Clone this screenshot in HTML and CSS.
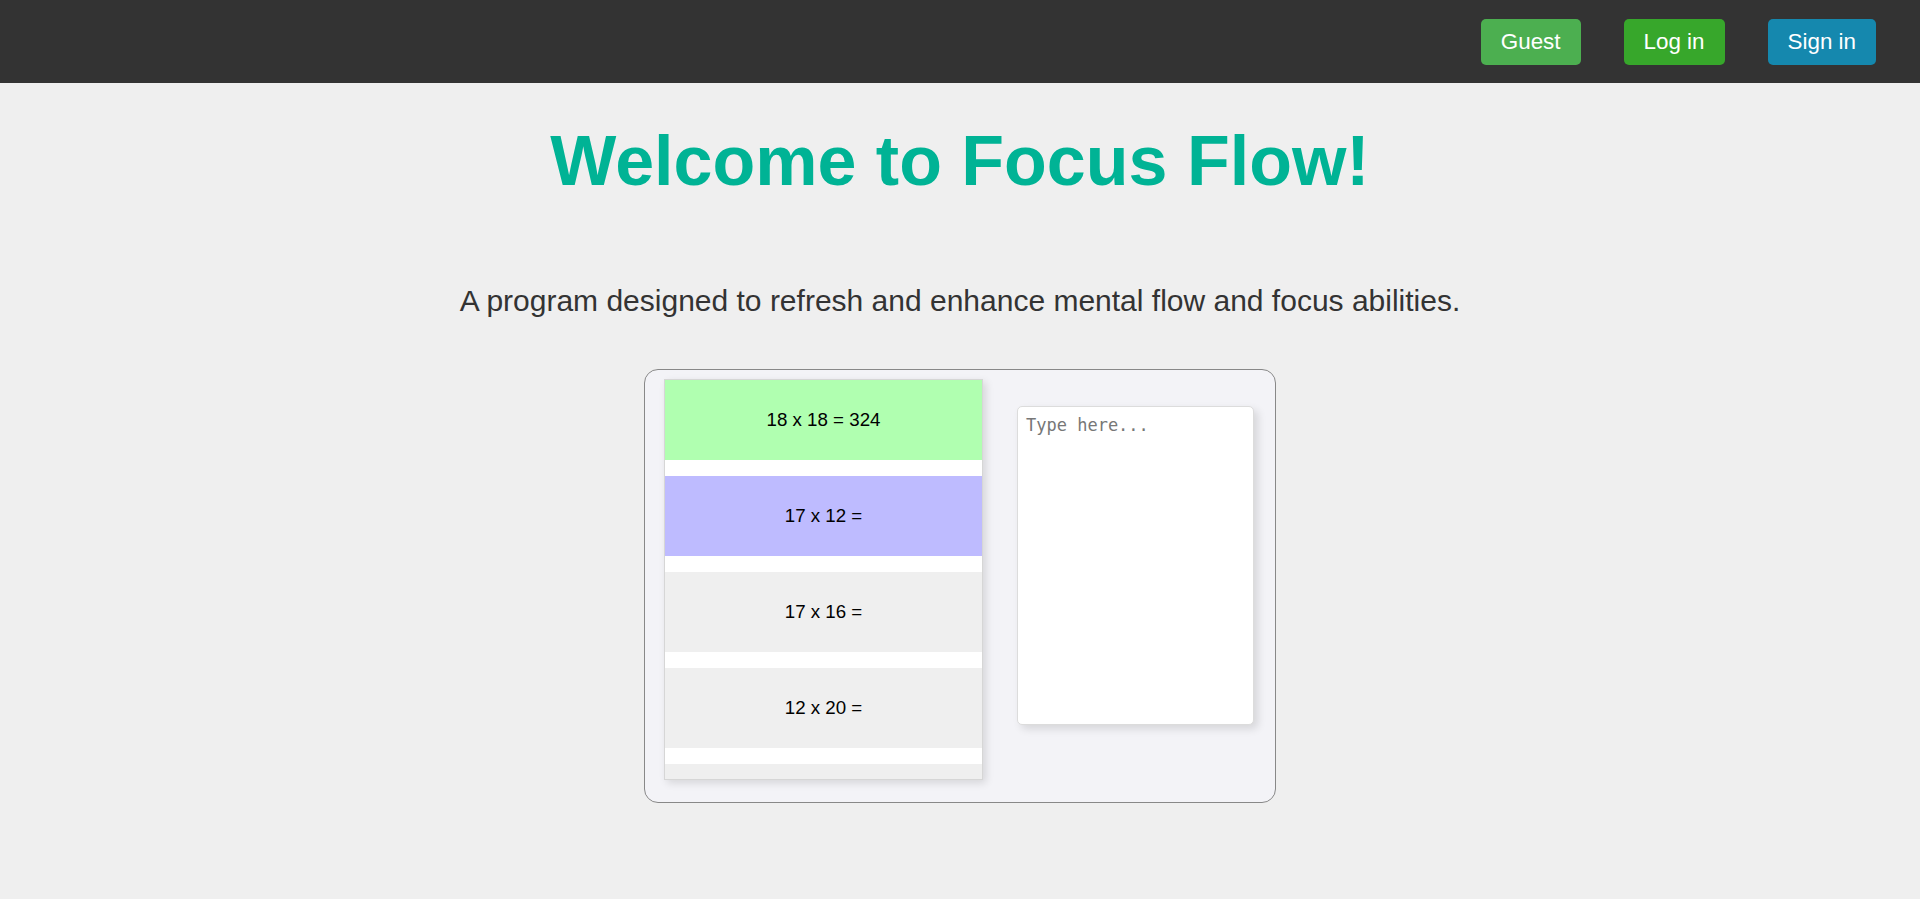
FILE: index.html
```html
<!DOCTYPE html>
<html lang="en">
<head>
<meta charset="utf-8">
<title>Focus Flow</title>
<link rel="stylesheet" href="styles.css">
</head>
<body>
<header class="navbar">
  <button class="btn btn-guest">Guest</button>
  <button class="btn btn-login">Log in</button>
  <button class="btn btn-signin">Sign in</button>
</header>
<main class="main">
  <h1 class="title">Welcome to Focus Flow!</h1>
  <p class="subtitle">A program designed to refresh and enhance mental flow and focus abilities.</p>
  <section class="card">
    <div class="problem-list">
      <div class="problem problem-done">18 x 18 = 324</div>
      <div class="problem problem-active">17 x 12 =</div>
      <div class="problem">17 x 16 =</div>
      <div class="problem">12 x 20 =</div>
      <div class="problem"></div>
    </div>
    <textarea class="answer" placeholder="Type here..."></textarea>
  </section>
</main>
</body>
</html>
```
FILE: styles.css
```css
* { box-sizing: border-box; }
html, body { margin: 0; padding: 0; }
body {
  background: #efefef;
  font-family: "Liberation Sans", Arial, sans-serif;
  color: #333;
}
.navbar {
  height: 83px;
  background: #333333;
  display: flex;
  justify-content: flex-end;
  align-items: center;
  gap: 43px;
  padding: 0 44px 0 0;
}
.btn {
  font-family: "Liberation Sans", Arial, sans-serif;
  font-size: 22.4px;
  line-height: normal;
  color: #fff;
  border: none;
  border-radius: 5px;
  padding: 10px 20px;
  cursor: pointer;
}
.btn-guest { background: #4caf50; }
.btn-login { background: #37a72b; }
.btn-signin { background: #1588ae; }
.main { text-align: center; }
.title {
  margin: 38px 0 0;
  font-size: 70px;
  font-weight: bold;
  line-height: normal;
  color: #00b395;
}
.subtitle {
  margin: 83px 0 0;
  font-size: 30px;
  line-height: normal;
  color: #333;
}
.card {
  width: 632px;
  height: 434px;
  margin: 51px auto 0;
  border: 1px solid #888;
  border-radius: 14px;
  background: #f3f3f7;
  padding: 9px 20px 20px 19px;
  display: flex;
  align-items: flex-start;
  gap: 34px;
}
.problem-list {
  width: 319px;
  height: 401px;
  flex: none;
  border: 1px solid #d6d6d6;
  background: #fff;
  overflow: hidden;
  box-shadow: 3px 3px 8px rgba(0, 0, 0, 0.12);
}
.problem {
  height: 80px;
  margin-bottom: 16px;
  background: #efefef;
  display: flex;
  align-items: center;
  justify-content: center;
  font-size: 18.72px;
  color: #000;
}
.problem-done { background: #b0ffb0; }
.problem-active { background: #bebbff; }
.answer {
  width: 237px;
  height: 319px;
  flex: none;
  margin-top: 27px;
  border: 1px solid #dcdcdc;
  border-radius: 5px;
  background: #fff;
  padding: 8px;
  resize: none;
  font-family: "DejaVu Sans Mono", monospace;
  font-size: 17px;
  box-shadow: 4px 4px 8px rgba(0, 0, 0, 0.12);
  outline: none;
}
.answer::placeholder { color: #777; }
```
